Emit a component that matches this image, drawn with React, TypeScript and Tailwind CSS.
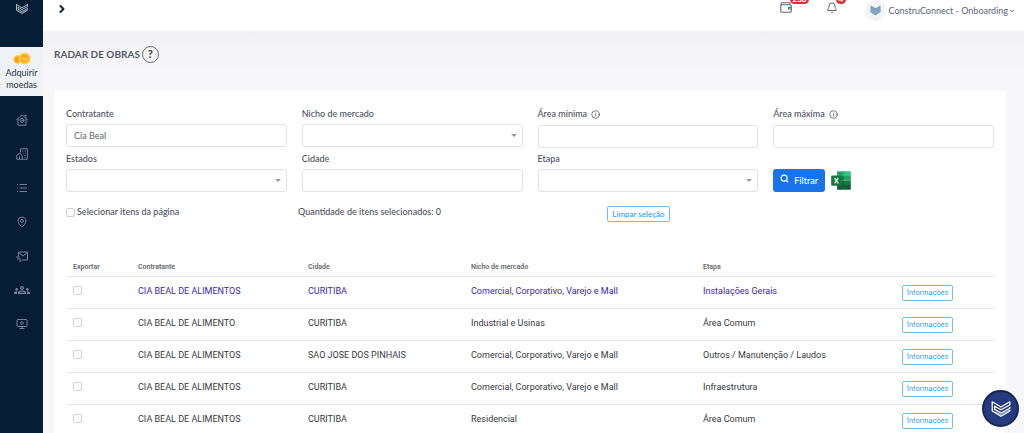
import React, { useState } from 'react'

import { Bell, ChevronDown, ChevronRight, Info, List, MapPin, MonitorPlay, Search } from 'lucide-react'
import { MdOutlineGroups } from 'react-icons/md'

interface WorkProps {
  id: number
  contractor: string
  city: string
  niche: string
  stage: string
  visited?: boolean
}

const works: WorkProps[] = [
  { id: 1, contractor: 'CIA BEAL DE ALIMENTOS', city: 'CURITIBA', niche: 'Comercial, Corporativo, Varejo e Mall', stage: 'Instalações Gerais', visited: true },
  { id: 2, contractor: 'CIA BEAL DE ALIMENTO', city: 'CURITIBA', niche: 'Industrial e Usinas', stage: 'Área Comum' },
  { id: 3, contractor: 'CIA BEAL DE ALIMENTOS', city: 'SAO JOSE DOS PINHAIS', niche: 'Comercial, Corporativo, Varejo e Mall', stage: 'Outros / Manutenção / Laudos' },
  { id: 4, contractor: 'CIA BEAL DE ALIMENTOS', city: 'CURITIBA', niche: 'Comercial, Corporativo, Varejo e Mall', stage: 'Infraestrutura' },
  { id: 5, contractor: 'CIA BEAL DE ALIMENTOS', city: 'CURITIBA', niche: 'Residencial', stage: 'Área Comum' },
]

const checkboxClass = 'block appearance-none size-[9px] rounded-xs border border-[#cfd1d4] bg-white checked:bg-blue-600'
const fieldClass = 'block w-full h-[23px] rounded-[3px] border border-[#dfe3e7] bg-white px-[7px] text-[9px] text-[#5b626b] outline-none focus:border-blue-400'
const outlineButton = 'block rounded-xs border border-[#6dbdf2] bg-white text-[#2f9bea] cursor-pointer'

const Logo: React.FC<{ className?: string }> = ({ className }) => (
  <svg viewBox="0 0 24 20" fill="none" stroke="currentColor" strokeWidth="1.6" strokeLinejoin="round" className={className}>
    <path d="M23 5V1L12 7.500 1 1v11.500L12 19l11-6.500V11" />
    <path d="M23 5L12 11 4 6.500v4L12 15l11-6V7.500" />
    <path d="M4 13.500l8 3.500 11-6" strokeWidth="0.800" />
  </svg>
)

const Coins: React.FC = () => (
  <svg viewBox="0 0 54 38" className="w-[18px] h-[13px]">
    <circle cx="14" cy="22" r="13" fill="#fcc83a" />
    <circle cx="14" cy="22" r="9" fill="#f7a01d" />
    <circle cx="35" cy="19" r="18" fill="#ffd34a" />
    <circle cx="35" cy="19" r="13" fill="#f9a825" />
    <path d="M27 14l8 4 8-4v9l-8 5-8-5z" fill="#fdc43c" />
  </svg>
)

const HomeIcon: React.FC = () => (
  <svg viewBox="0 0 24 24" fill="none" stroke="currentColor" strokeWidth="2" strokeLinejoin="round" strokeLinecap="round" className="size-3">
    <path d="M1 11.500L12 1.500l11 10M4 9.500V22.500h16V9.500M17 2.500h3v4" />
    <circle cx="12" cy="12.500" r="4" />
    <circle cx="12" cy="12.500" r="0.800" />
  </svg>
)

const BuildingIcon: React.FC = () => (
  <svg viewBox="0 0 24 24" fill="none" stroke="currentColor" strokeWidth="2" strokeLinejoin="round" className="size-3">
    <path d="M9 9V1.500h13.500v21H1.500V15L7 10l5.500 5v7.500M7 22v-5" />
    <path d="M12.500 6h2M17.500 6h2M15 10.500h1M18.500 10.500h1M17 15h2M17 18.500h2" />
  </svg>
)

const MailIcon: React.FC = () => (
  <svg viewBox="0 0 24 22" fill="none" stroke="currentColor" strokeWidth="2" strokeLinejoin="round" strokeLinecap="round" className="w-3 h-[11px]">
    <path d="M5 9V2h18v16H12" />
    <path d="M5 3l9 7 9-7M1 12h6M3 16h6M7 20h3" />
  </svg>
)

const WalletIcon: React.FC = () => (
  <svg viewBox="0 0 24 22" fill="none" stroke="currentColor" strokeWidth="2.200" strokeLinejoin="round" className="w-3 h-[11px]">
    <rect x="1.500" y="5.500" width="21" height="15" rx="2" />
    <path d="M2 6V3.500q0-2 2-2h16v4M22 11h-5v3h5" />
  </svg>
)

const ExcelIcon: React.FC = () => (
  <svg viewBox="0 0 60 58" className="w-5 h-[19px]">
    <path d="M18 1h21v14H18z" fill="#21a366" />
    <path d="M39 1h19q2 0 2 2v12H39z" fill="#33c481" />
    <path d="M18 15h21v14H18z" fill="#107c41" />
    <path d="M39 15h21v14H39z" fill="#21a366" />
    <path d="M18 29h21v14H18z" fill="#185c37" />
    <path d="M39 29h21v14H39z" fill="#107c41" />
    <path d="M18 43h42v12q0 2-2 2H20q-2 0-2-2z" fill="#185c37" />
    <rect y="14" width="32" height="31" rx="3" fill="#107c41" />
    <path d="M10.500 21.500l11 16M21.500 21.500l-11 16" stroke="#fff" strokeWidth="4" />
  </svg>
)

const menu = [
  { label: 'Início', icon: <HomeIcon /> },
  { label: 'Empresas', icon: <BuildingIcon /> },
  { label: 'Listas', icon: <List className="size-3" /> },
  { label: 'Mapa', icon: <MapPin className="size-3" /> },
  { label: 'Mensagens', icon: <MailIcon /> },
  { label: 'Equipe', icon: <MdOutlineGroups className="size-4" /> },
  { label: 'Treinamentos', icon: <MonitorPlay className="size-3" /> },
]

const Sidebar: React.FC = () => (
  <aside className="w-[43px] shrink-0 bg-[#061e35] text-[#76819b]">
    <div className="flex justify-center h-[47px] pt-1">
      <Logo className="w-3 h-2.5 text-[#cfd8e2]" />
    </div>
    <a href="#moedas" className="flex flex-col items-center h-[49px] pt-[5px] bg-[#eef2f7] text-[9px] leading-3 text-center text-[#2b3440]">
      <Coins />
      <span className="mt-0.5">Adquirir moedas</span>
    </a>
    <nav className="flex flex-col pt-[7px]">
      {menu.map((item) => (
        <a key={item.label} href="#menu" aria-label={item.label} className="flex items-center justify-center h-[34px]">
          {item.icon}
        </a>
      ))}
    </nav>
  </aside>
)

const Header: React.FC = () => (
  <header className="flex items-start justify-between h-[31px] shrink-0 overflow-hidden bg-white pl-[13px] pr-[9px] text-[#5c6579]">
    <button aria-label="Abrir menu" className="mt-[3px] text-[#10263d] cursor-pointer">
      <ChevronRight className="size-3" strokeWidth={4} />
    </button>
    <div className="flex items-start">
      <button aria-label="Carteira" className="relative mt-0.5 mr-[34px]">
        <WalletIcon />
        <span className="absolute -top-[7px] left-2.5 rounded-full bg-[#dc2f35] px-[3px] text-[8px] leading-[9px] font-bold text-white">238</span>
      </button>
      <button aria-label="Notificações" className="relative mt-0.5 mr-[27px]">
        <Bell className="size-3" />
        <span className="absolute -top-[7px] left-2.5 rounded-full bg-[#dc2f35] px-[3px] text-[8px] leading-[9px] font-bold text-white">4</span>
      </button>
      <button className="flex items-center text-[9px] cursor-pointer">
        <span className="flex items-center justify-center size-[21px] rounded-full bg-[#f3f4f5] mr-[3px]">
          <svg viewBox="0 0 24 24" className="size-[11px]">
            <path d="M1 1l11 6 11-6v15l-11 7-11-7z" fill="#7d9db8" />
            <path d="M2 11l10 5 10-5M2 15l10 5 10-5" fill="none" stroke="#a7c3d9" />
          </svg>
        </span>
        ConstruConnect - Onboarding
        <ChevronDown className="size-1.5 ml-px" strokeWidth={4} />
      </button>
    </div>
  </header>
)

interface FieldProps {
  id: string
  label: string
  type?: 'text' | 'select'
  info?: boolean
  defaultValue?: string
}

const Field: React.FC<FieldProps> = ({ id, label, type = 'text', info, defaultValue }) => (
  <div>
    <label htmlFor={id} className={`flex items-center gap-1 mb-[3px] pt-0.5 text-[9px] font-medium text-[#4b525c] ${info ? 'h-[18px]' : 'h-[17px]'}`}>
      {label}
      {info && <Info className="size-[9px]" />}
    </label>
    {type === 'select' ? (
      <div className="relative">
        <select id={id} className={`${fieldClass} appearance-none`}>
          <option value=""></option>
        </select>
        <svg viewBox="0 0 6 3" className="absolute right-1.5 top-2.5 w-1.5 h-[3px] pointer-events-none">
          <path d="M0 0h6L3 3z" fill="#999" />
        </svg>
      </div>
    ) : (
      <input id={id} type="text" defaultValue={defaultValue} className={fieldClass} />
    )}
  </div>
)

const App: React.FC = () => {
  const [selected, setSelected] = useState<number[]>([])

  const toggle = (id: number) => setSelected(selected.includes(id) ? selected.filter((s) => s !== id) : [...selected, id])

  const toggleAll = () => setSelected(selected.length === works.length ? [] : works.map((w) => w.id))

  return (
    <div className="flex h-screen overflow-hidden bg-[#f7f7fa] font-['Lato',sans-serif]">
      <Sidebar />
      <div className="flex flex-col flex-1 min-w-0">
        <Header />
        <main className="flex-1 min-h-0 overflow-hidden bg-linear-to-b from-[#f1f1f5] to-[#f7f7fa] to-10% pl-[11px] pr-[18px]">
          <div className="flex items-center gap-0.5 h-[60px] pb-3.5">
            <h1 className="text-[10px] font-bold text-[#555c66]">RADAR DE OBRAS</h1>
            <button aria-label="Ajuda" className="flex items-center justify-center size-[17px] rounded-full border border-[#666] text-[11px] font-black text-[#444]">?</button>
          </div>

          <section className="rounded-t bg-white px-3 pt-[13px] pb-6">
            <form onSubmit={(e) => e.preventDefault()} className="grid grid-cols-4 gap-x-[15px] gap-y-px">
              <Field id="contratante" label="Contratante" defaultValue="Cia Beal" />
              <Field id="nicho" label="Nicho de mercado" type="select" />
              <Field id="area-min" label="Área mínima" info />
              <Field id="area-max" label="Área máxima" info />
              <Field id="estados" label="Estados" type="select" />
              <Field id="cidade" label="Cidade" />
              <Field id="etapa" label="Etapa" type="select" />
              <div className="flex items-end gap-1.5">
                <button type="submit" className="flex items-center gap-[5px] h-[23px] rounded-[3px] bg-[#1a73e8] px-[7px] text-[9px] font-medium text-white cursor-pointer">
                  <Search className="size-[9px] mb-1" strokeWidth={3} />
                  Filtrar
                </button>
                <button type="button" aria-label="Exportar para Excel" className="pb-0.5 cursor-pointer">
                  <ExcelIcon />
                </button>
              </div>
            </form>

            <div className="flex items-start mt-3.5 text-[9px] leading-3 font-medium text-[#4b525c]">
              <label className="flex items-center gap-0.5 w-1/4">
                <input type="checkbox" checked={selected.length === works.length} onChange={toggleAll} className={checkboxClass} />
                Selecionar itens da página
              </label>
              <span className="w-1/3">Quantidade de itens selecionados: {selected.length}</span>
              <button onClick={() => setSelected([])} className={`${outlineButton} h-4 px-1 text-[8px]`}>Limpar seleção</button>
            </div>

            <table className="w-full mt-9 table-fixed text-left font-['Roboto',sans-serif]">
              <thead>
                <tr className="h-[18px] border-b border-[#e7e8ea] align-top text-[7px] leading-[18px] text-[#66696d]">
                  <th className="w-[65px] pl-[7px] font-semibold">Exportar</th>
                  <th className="w-[170px] pl-[7px] font-semibold">Contratante</th>
                  <th className="w-[163px] pl-[7px] font-semibold">Cidade</th>
                  <th className="w-1/4 pl-[7px] font-semibold">Nicho de mercado</th>
                  <th className="pl-[7px] font-semibold">Etapa</th>
                  <th className="w-[99px]"></th>
                </tr>
              </thead>
              <tbody>
                {works.map((work) => (
                  <tr key={work.id} className={`h-8 border-b border-[#e7e8ea] align-top text-[9px] leading-3 ${work.visited ? 'text-[#3a1fb5]' : 'text-[#36393d]'}`}>
                    <td className="pt-[9px] pl-[7px]">
                      <input type="checkbox" aria-label={`Exportar ${work.contractor}`} checked={selected.includes(work.id)} onChange={() => toggle(work.id)} className={checkboxClass} />
                    </td>
                    <td className="pt-2 pl-[7px]">{work.contractor}</td>
                    <td className="pt-2 pl-[7px]">{work.city}</td>
                    <td className="pt-2 pl-[7px]">{work.niche}</td>
                    <td className="pt-2 pl-[7px]">{work.stage}</td>
                    <td className="pt-2 pl-[7px]">
                      <button className={`${outlineButton} h-4 px-1 font-['Inter',sans-serif] text-[7px]`}>Informações</button>
                    </td>
                  </tr>
                ))}
              </tbody>
            </table>
          </section>
        </main>
      </div>

      <button aria-label="Abrir atendimento" className="fixed right-[5px] bottom-1.5 flex items-center justify-center size-[37px] rounded-full border-2 border-[#17264f] bg-[#263b7e] text-white cursor-pointer">
        <Logo className="w-5 h-4" />
      </button>
    </div>
  )
}

export default App
